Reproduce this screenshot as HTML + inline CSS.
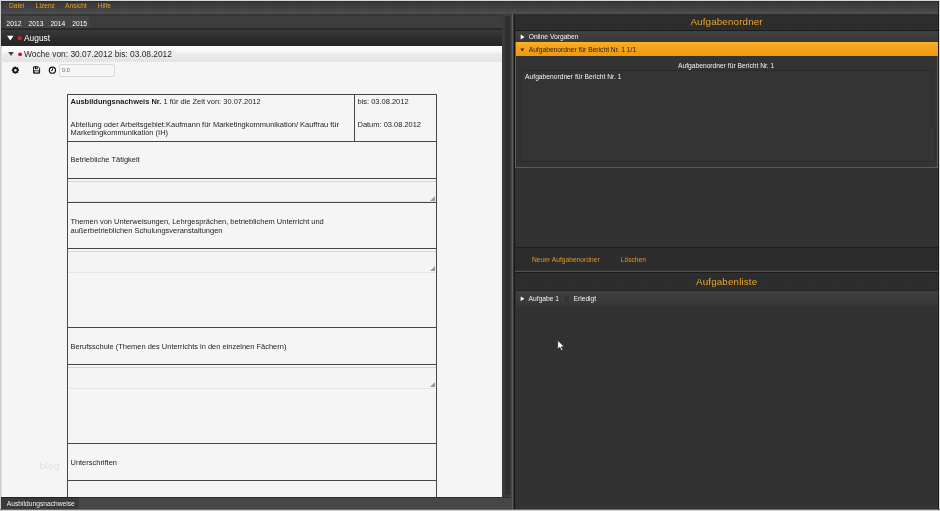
<!DOCTYPE html>
<html lang="de">
<head>
<meta charset="utf-8">
<title>Ausbildungsnachweise</title>
<style>
html,body{margin:0;padding:0;}
body{width:940px;height:511px;overflow:hidden;position:relative;background:#323232;font-family:"Liberation Sans",sans-serif;font-size:8px;color:#222;}
.abs{position:absolute;}
.t{position:absolute;white-space:nowrap;line-height:1;}
#topline{left:0;top:0;width:940px;height:1px;background:#d8d8d8;}
#menubar{left:0;top:1px;width:940px;height:13px;background:linear-gradient(#2b2b2b 0,#3b3b3b 2px,#404040 50%,#4f4f4f 100%);}
.menu{color:#e6a226;font-size:6.6px;top:3px;}
/* left side */
#tabstrip{left:1px;top:14px;width:501px;height:16px;background:linear-gradient(#333 0,#3d3d3d 2px,#3d3d3d 100%);}
#tabs{left:5px;top:16px;width:84px;height:12px;background:#454545;}
.tab{color:#fff;font-size:6.7px;top:20.6px;}
#august{left:1px;top:30px;width:501px;height:16px;background:linear-gradient(#393939,#2b2b2b 60%,#262626);}
#woche{left:1px;top:46px;width:501px;height:15px;background:linear-gradient(#fbfbfb 0,#f7f7f7 40%,#ededed 47%,#e3e3e3 100%);}
#content{left:1px;top:61px;width:501px;height:436px;background:#f5f5f5;border-top:1px dotted #d6d6d6;box-sizing:border-box;}
#leftedge{left:0;top:0;width:1px;height:511px;background:#cdcdcd;}
#leftedge2{left:1px;top:46px;width:1px;height:451px;background:#e0e0e0;}
#vscroll{left:502px;top:14px;width:9px;height:483px;background:#3b3b3b;}
#vscroll2{left:505px;top:16px;width:5px;height:479px;background:#2f2f2f;border-radius:2px;}
#split1{left:511px;top:14px;width:2px;height:497px;background:linear-gradient(90deg,#464646 0,#464646 50%,#5c5c5c 50%);}
#split2{left:513px;top:14px;width:2px;height:497px;background:linear-gradient(90deg,#383838 0,#383838 50%,#161616 50%);}
#status{left:1px;top:497px;width:510px;height:13px;background:linear-gradient(#2c2c2c 0,#2c2c2c 1px,#474747 1px);}
#statustab{left:1px;top:497px;width:78px;height:13px;background:linear-gradient(#242424 0,#242424 1px,#3a3a3a 1px);}
#bottomline{left:0;top:509px;width:940px;height:2px;background:linear-gradient(#6a6a6a 0,#6a6a6a 50%,#d4d4d4 50%);}
.tex{background-image:radial-gradient(rgba(0,0,0,0.09) 0.55px,transparent 0.75px),radial-gradient(rgba(255,255,255,0.025) 0.55px,transparent 0.75px);background-size:3px 3px,3px 3px;background-position:0 0,1.5px 1.5px;}
/* table */
.ln{position:absolute;background:#464646;}
.ta{position:absolute;left:68px;width:368px;background:#f4f4f4;border-top:1px solid #d6d6d6;border-bottom:1px solid #e6e6e6;box-sizing:border-box;}
.grip{position:absolute;width:0;height:0;border-left:5px solid transparent;border-bottom:5px solid #9a9a9a;}
.tx{color:#1d1d1d;font-size:7.47px;}
/* right side */
#rhead{left:515px;top:14px;width:423px;height:16px;background:#2d2d2d;}
#rline1{left:515px;top:30px;width:423px;height:1px;background:#1a1a1a;}
#online{left:516px;top:31px;width:422px;height:11px;background:linear-gradient(#414141,#383838);}
#orange{left:516px;top:42px;width:422px;height:14px;background:linear-gradient(#f8b130 0,#f5a51c 30%,#ee9a12 100%);}
#folder{left:515px;top:42px;width:423px;height:126px;background:#333;border:1px solid #74582f;border-top:none;box-sizing:border-box;}
#fta{left:521px;top:70px;width:411px;height:92px;background:#343434;border:1px solid #2b2b2b;box-sizing:border-box;}
#btnbar{left:515px;top:247px;width:423px;height:23px;background:#2c2c2c;border-top:1px solid #1e1e1e;box-sizing:border-box;}
#rline2{left:515px;top:271px;width:423px;height:1px;background:#505050;}
#rline3{left:515px;top:272px;width:423px;height:1px;background:#1c1c1c;}
#lhead{left:515px;top:273px;width:423px;height:18px;background:linear-gradient(#2d2d2d 0,#2d2d2d 17px,#262626 17px);}
#task{left:516px;top:291px;width:422px;height:15px;background:linear-gradient(#404040,#373737);}
#redge1{left:938px;top:1px;width:1px;height:509px;background:#1c1c1c;}
#redge2{left:939px;top:0;width:1px;height:511px;background:#d8d8d8;}
.title{color:#f0a62a;font-size:9.8px;letter-spacing:0.15px;}
.w{color:#f2f2f2;font-size:6.7px;}
.o{color:#e09a20;font-size:6.7px;}
</style>
</head>
<body>
<div id="root" style="position:absolute;left:0;top:0;width:940px;height:511px;will-change:transform">
<div class="abs" id="menubar"></div>
<div class="abs" id="topline"></div>
<span class="t menu" style="left:9px">Datei</span>
<span class="t menu" style="left:35.8px">Lizenz</span>
<span class="t menu" style="left:65.1px">Ansicht</span>
<span class="t menu" style="left:97.7px">Hilfe</span>

<div class="abs" id="tabstrip"></div>
<div class="abs" id="tabs"></div>
<div class="abs" style="left:1px;top:28px;width:501px;height:2px;background:linear-gradient(#2e2e2e,#252525)"></div>
<span class="t tab" style="left:6.6px">2012</span>
<span class="t tab" style="left:28.6px">2013</span>
<span class="t tab" style="left:50.4px">2014</span>
<span class="t tab" style="left:72.2px">2015</span>

<div class="abs" id="august"></div>
<svg class="abs" style="left:7px;top:35px" width="8" height="7"><polygon points="0.1,0.7 6.5,0.7 3.3,5.4" fill="#fff"/></svg>
<svg class="abs" style="left:16px;top:35px" width="8" height="7"><circle cx="3.8" cy="3.2" r="2.1" fill="#d81f2a"/></svg>
<span class="t" style="left:24px;top:34.3px;color:#fff;font-size:8.4px">August</span>

<div class="abs" id="woche"></div>
<svg class="abs" style="left:8px;top:51px" width="7" height="6"><polygon points="0.2,1.1 5.8,1.1 3,4.9" fill="#444"/></svg>
<svg class="abs" style="left:17px;top:51px" width="7" height="7"><circle cx="3.1" cy="3.3" r="1.9" fill="#c4121e"/></svg>
<span class="t" style="left:24px;top:50.2px;color:#2a2a2a;font-size:8.4px">Woche von: 30.07.2012 bis: 03.08.2012</span>

<div class="abs" id="content"></div>

<!-- toolbar icons -->
<svg class="abs" style="left:8px;top:62px" width="52" height="16" viewBox="8 62 52 16">
<g transform="translate(11.65 66.4) scale(0.4167)"><g fill="#111"><circle cx="9" cy="9" r="6.3"/><rect x="6.8" y="0.3" width="4.4" height="17.4" rx="1"/><rect x="6.8" y="0.3" width="4.4" height="17.4" rx="1" transform="rotate(45 9 9)"/><rect x="6.8" y="0.3" width="4.4" height="17.4" rx="1" transform="rotate(90 9 9)"/><rect x="6.8" y="0.3" width="4.4" height="17.4" rx="1" transform="rotate(135 9 9)"/></g><circle cx="9" cy="9" r="3" fill="#f5f5f5"/></g>
<g transform="translate(33.1 66.3) scale(0.5)"><path d="M1 1H10.2L13 3.8V13.8H1z" fill="#f5f5f5" stroke="#111" stroke-width="2" stroke-linejoin="miter"/><rect x="3.6" y="1" width="5.8" height="4.6" fill="#111"/><rect x="6.8" y="1.6" width="1.5" height="2.6" fill="#f5f5f5"/><rect x="1.5" y="8.2" width="11" height="5.4" fill="#111"/><rect x="3" y="9.8" width="8" height="2.6" fill="#f5f5f5"/></g>
<g fill="none" stroke="#111"><circle cx="52.4" cy="70.15" r="3.1" stroke-width="1.2"/><path d="M52.5 68.2V70.4H51" stroke-width="0.9"/></g>
</svg>
<div class="abs" style="left:59px;top:64px;width:55.5px;height:13px;border:1px solid #d9d9d9;border-radius:2px;box-sizing:border-box;background:#f6f6f6"></div>
<span class="t" style="left:62px;top:67.8px;color:#666;font-size:5.6px">0.0</span>

<!-- table lines -->
<div class="ln" style="left:67px;top:94px;width:1px;height:403px"></div>
<div class="ln" style="left:436px;top:94px;width:1px;height:403px"></div>
<div class="ln" style="left:354px;top:94px;width:1px;height:47px"></div>
<div class="ln" style="left:67px;top:94px;width:370px;height:1px"></div>
<div class="ln" style="left:67px;top:141px;width:370px;height:1px"></div>
<div class="ln" style="left:67px;top:178px;width:370px;height:1px"></div>
<div class="ln" style="left:67px;top:202px;width:370px;height:1px"></div>
<div class="ln" style="left:67px;top:248px;width:370px;height:1px"></div>
<div class="ln" style="left:67px;top:327px;width:370px;height:1px"></div>
<div class="ln" style="left:67px;top:364px;width:370px;height:1px"></div>
<div class="ln" style="left:67px;top:443px;width:370px;height:1px"></div>
<div class="ln" style="left:67px;top:480px;width:370px;height:1px"></div>

<div class="ta" style="top:181px;height:21px"></div>
<div class="grip" style="left:430px;top:196px"></div>
<div class="ta" style="top:251px;height:22px"></div>
<div class="grip" style="left:430px;top:266px"></div>
<div class="ta" style="top:367px;height:22px"></div>
<div class="grip" style="left:430px;top:382px"></div>

<span class="t tx" style="left:70.5px;top:98px"><b>Ausbildungsnachweis Nr.</b> 1 für die Zeit von: 30.07.2012</span>
<span class="t tx" style="left:357.5px;top:98px">bis: 03.08.2012</span>
<span class="t tx" style="left:70.5px;top:120.5px">Abteilung oder Arbeitsgebiet:Kaufmann für Marketingkommunikation/ Kauffrau für</span>
<span class="t tx" style="left:70.5px;top:128.8px">Marketingkommunikation (IH)</span>
<span class="t tx" style="left:357.5px;top:120.5px">Datum: 03.08.2012</span>
<span class="t tx" style="left:70.5px;top:155.5px">Betriebliche Tätigkeit</span>
<span class="t tx" style="left:70.5px;top:217.8px">Themen von Unterweisungen, Lehrgesprächen, betrieblichem Unterricht und</span>
<span class="t tx" style="left:70.5px;top:226.6px">außerbetrieblichen Schulungsveranstaltungen</span>
<span class="t tx" style="left:70.5px;top:342.8px">Berufsschule (Themen des Unterrichts in den einzelnen Fächern)</span>
<span class="t tx" style="left:70.5px;top:458.7px">Unterschriften</span>
<span class="t" style="left:39.5px;top:460.5px;color:#cecece;font-size:9.4px;font-family:'DejaVu Sans Light','DejaVu Sans','Liberation Sans',sans-serif;font-weight:200;letter-spacing:0">blog</span>

<div class="abs" id="vscroll"></div>
<div class="abs" id="vscroll2"></div>
<div class="abs" id="status"></div>
<div class="abs" id="statustab"></div>
<span class="t" style="left:6.8px;top:501px;color:#eee;font-size:6.7px">Ausbildungsnachweise</span>
<div class="abs" id="leftedge"></div>
<div class="abs" id="leftedge2"></div>
<div class="abs" id="split1"></div>
<div class="abs" id="split2"></div>

<!-- right side -->
<div class="abs" id="rhead"></div>
<span class="t title" style="left:690.4px;top:17px">Aufgabenordner</span>
<div class="abs" id="rline1"></div>
<div class="abs" id="online"></div>
<svg class="abs" style="left:520px;top:34px" width="6" height="7"><polygon points="0.7,0.6 4.5,3 0.7,5.4" fill="#fff"/></svg>
<span class="t w" style="left:528.7px;top:34.1px">Online Vorgaben</span>
<div class="abs" id="folder"></div>
<div class="abs" id="orange"></div>
<svg class="abs" style="left:520px;top:48px" width="6" height="5"><polygon points="0.4,0.4 4.2,0.4 2.3,3.4" fill="#3a2200"/></svg>
<span class="t" style="left:528.7px;top:47.1px;color:#2a1c05;font-size:6.7px">Aufgabenordner für Bericht Nr. 1 1/1</span>
<span class="t w" style="left:678px;top:63.1px">Aufgabenordner für Bericht Nr. 1</span>
<div class="abs" id="fta"></div>
<div class="abs" style="left:930px;top:128px;width:3px;height:32px;background:#383838;border-radius:1px"></div>
<span class="t w" style="left:525.1px;top:74px">Aufgabenordner für Bericht Nr. 1</span>

<div class="abs" id="btnbar"></div>
<span class="t o" style="left:532px;top:257px">Neuer Aufgabenordner</span>
<span class="t o" style="left:620.7px;top:257px">Löschen</span>
<div class="abs" id="rline2"></div>
<div class="abs" id="rline3"></div>
<div class="abs" id="lhead"></div>
<span class="t title" style="left:696px;top:277px">Aufgabenliste</span>
<div class="abs" id="task"></div>
<svg class="abs" style="left:520px;top:295px" width="6" height="7"><polygon points="0.7,1.4 4.5,3.7 0.7,6" fill="#fff"/></svg>
<span class="t w" style="left:528.6px;top:295.6px">Aufgabe 1</span>
<div class="abs" style="left:563px;top:295px;width:7px;height:8px;border:1px solid #404040;border-radius:1px 1px 3px 3px;box-sizing:border-box;background:#343434"></div>
<span class="t w" style="left:573.5px;top:295.6px">Erledigt</span>

<div class="abs tex" style="left:1px;top:3px;width:937px;height:11px"></div>
<div class="abs tex" style="left:1px;top:14px;width:501px;height:14px"></div>
<div class="abs tex" style="left:515px;top:14px;width:423px;height:16px"></div>
<div class="abs tex" style="left:515px;top:248px;width:423px;height:22px"></div>
<div class="abs tex" style="left:515px;top:273px;width:423px;height:17px"></div>
<div class="abs tex" style="left:79px;top:498px;width:432px;height:11px"></div>
<!-- cursor -->
<svg class="abs" style="left:555px;top:338px" width="14" height="16" viewBox="555 338 14 16"><path d="M557.8 340.4V349L559.9 347.2L561.4 350.6L562.8 350L561.3 346.7H564.2z" fill="#fff" stroke="#1a1a1a" stroke-width="0.5"/></svg>

<div class="abs" id="redge1"></div>
<div class="abs" id="redge2"></div>
<div class="abs" id="bottomline"></div>
</div>
</body>
</html>
